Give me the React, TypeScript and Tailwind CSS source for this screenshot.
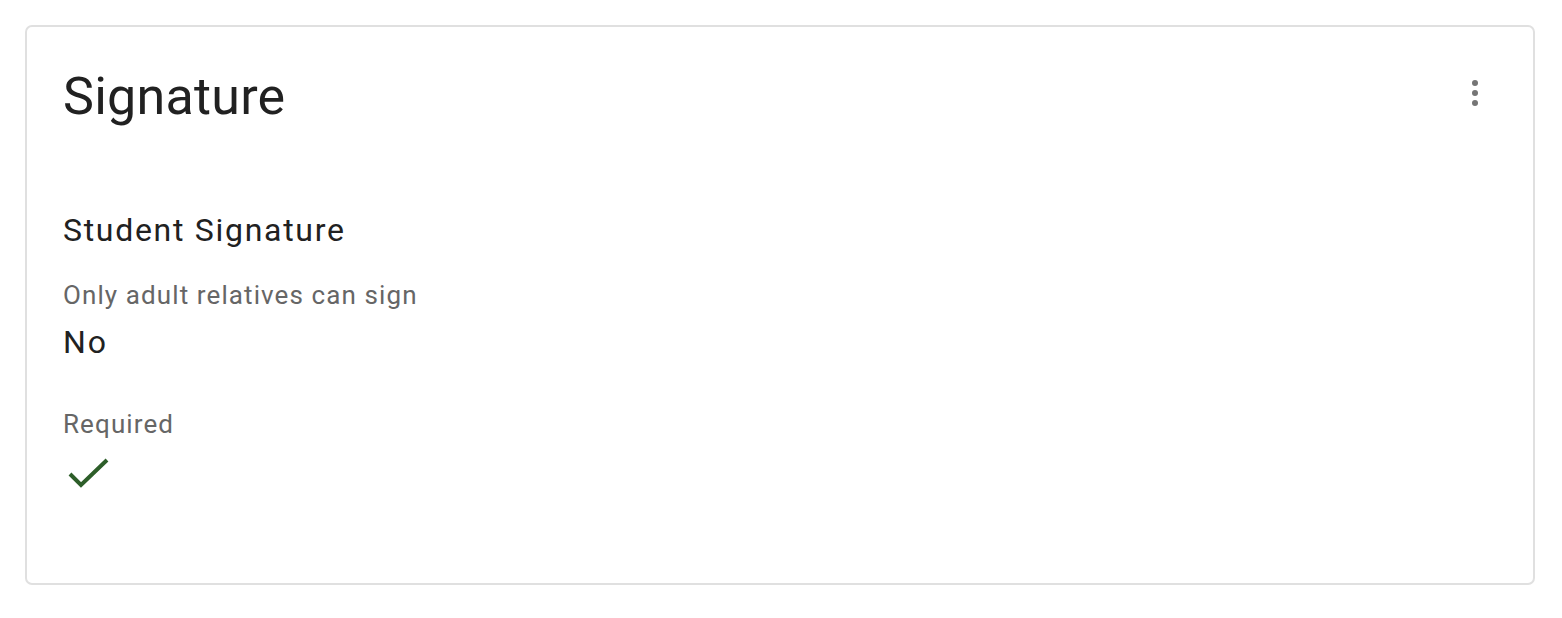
import React from "react";

const MoreVert = () => (
  <svg width="6" height="26" viewBox="0 0 6 26" className="mt-[13px] mr-[55px]">
    <circle cx="3" cy="3" r="3" fill="#757575" />
    <circle cx="3" cy="13" r="3" fill="#757575" />
    <circle cx="3" cy="23" r="3" fill="#757575" />
  </svg>
);

const Check = () => (
  <svg width="50" height="40" viewBox="0 0 50 40" className="mt-[10px]">
    <polyline
      points="7,24 18,35 44,10"
      fill="none"
      stroke="#2d5e29"
      strokeWidth="4"
    />
  </svg>
);

export default function App() {
  return (
    <div className="bg-white w-[1562px] h-[618px] pt-[25px] pl-[25px] font-['Roboto',sans-serif]">
      <div className="w-[1510px] h-[560px] border-2 border-[#e0e0e0] rounded-[7px] bg-white pl-[36px] pt-[40px]">
        <header className="flex items-start justify-between">
          <h1 className="text-[52px] leading-[60px] tracking-[0.25px] text-[#212121] font-normal">Signature</h1>
          <MoreVert />
        </header>
        <section className="mt-[83px] flex flex-col">
          <h2 className="text-[32px] leading-[40px] tracking-[1.7px] text-[#212121]">Student Signature</h2>
          <span className="mt-[29px] text-[26px] leading-[32px] tracking-[1.1px] text-[#666666]">
            Only adult relatives can sign
          </span>
          <span className="mt-[11px] text-[32px] leading-[40px] tracking-[2px] text-[#212121]">No</span>
          <span className="mt-[46px] text-[26px] leading-[32px] tracking-[1.1px] text-[#666666]">Required</span>
          <Check />
        </section>
      </div>
    </div>
  );
}
